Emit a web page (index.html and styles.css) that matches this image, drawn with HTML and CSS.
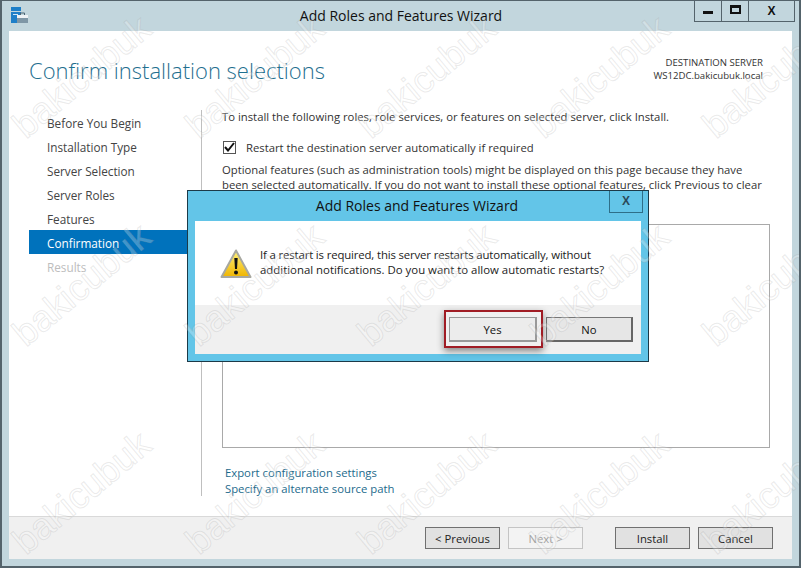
FILE: index.html
```html
<!DOCTYPE html>
<html lang="en">
<head>
<meta charset="utf-8">
<title>Add Roles and Features Wizard</title>
<link rel="stylesheet" href="styles.css">
</head>
<body>
<div class="window">
  <header class="titlebar">
    <svg class="appicon" width="17" height="16" viewBox="0 0 17 16">
      <rect x="0" y="0" width="10" height="4" fill="#1e7fc8"/>
      <rect x="0" y="5" width="10" height="11" fill="#1e7fc8"/>
      <rect x="2" y="7" width="5" height="1" fill="#cfe6f6"/>
      <path d="M6 8h11v8H6z" fill="#7f97a6"/>
      <path d="M6 8h11v3H6z" fill="#eef2f5"/>
      <path d="M9.5 8V6h4v2" fill="none" stroke="#4d6675"/>
    </svg>
    <h1 class="wintitle">Add Roles and Features Wizard</h1>
    <div class="controls">
      <span class="ctl ctl-min"><i></i></span>
      <span class="ctl ctl-max"><i></i></span>
      <span class="ctl ctl-close">X</span>
    </div>
  </header>
  <div class="client">
    <main class="page">
      <div class="head">
        <h2 class="pagetitle">Confirm installation selections</h2>
        <div class="dest">DESTINATION SERVER<br>WS12DC.bakicubuk.local</div>
      </div>
      <div class="body">
        <nav class="nav">
          <a>Before You Begin</a>
          <a>Installation Type</a>
          <a>Server Selection</a>
          <a>Server Roles</a>
          <a>Features</a>
          <a class="on">Confirmation</a>
          <a class="off">Results</a>
        </nav>
        <section class="pane">
          <p class="intro">To install the following roles, role services, or features on selected server, click Install.</p>
          <div class="check"><span class="box"><svg width="11" height="10" viewBox="0 0 11 10"><path d="M1 5l3 3.5L10 1" fill="none" stroke="#111" stroke-width="2"/></svg></span>Restart the destination server automatically if required</div>
          <p class="note">Optional features (such as administration tools) might be displayed on this page because they have been selected automatically. If you do not want to install these optional features, click Previous to clear</p>
          <div class="list"></div>
          <div class="links"><a>Export configuration settings</a><a>Specify an alternate source path</a></div>
        </section>
      </div>
    </main>
    <footer class="foot">
      <button class="btn">&lt; Previous</button>
      <button class="btn btn-off">Next &gt;</button>
      <button class="btn btn-gap">Install</button>
      <button class="btn">Cancel</button>
    </footer>
  </div>

  <div class="dialog">
    <div class="dtitle">Add Roles and Features Wizard<span class="dclose">X</span></div>
    <div class="dmain">
      <svg class="warn" width="32" height="30" viewBox="0 0 32 30">
        <defs><linearGradient id="wg" x1="0" y1="0" x2="0" y2="1"><stop offset="0" stop-color="#fff27a"/><stop offset="1" stop-color="#efb400"/></linearGradient></defs>
        <path d="M16 1.5L30.5 28H1.5z" fill="url(#wg)" stroke="#a8a8a0" stroke-width="2" stroke-linejoin="round"/>
        <path d="M14.3 9h3.4l-.7 11h-2z" fill="#111"/>
        <circle cx="16" cy="23.5" r="2" fill="#111"/>
      </svg>
      <p class="dtext">If a restart is required, this server restarts automatically, without additional notifications. Do you want to allow automatic restarts?</p>
    </div>
    <div class="dfoot">
      <span class="hl"><button class="dbtn dbtn-yes">Yes</button></span>
      <button class="dbtn">No</button>
    </div>
  </div>

  <div class="marks" aria-hidden="true">
    <span>bakicubuk</span><span>bakicubuk</span><span>bakicubuk</span><span>bakicubuk</span><span>bakicubuk</span>
    <span>bakicubuk</span><span>bakicubuk</span><span>bakicubuk</span><span>bakicubuk</span><span>bakicubuk</span>
    <span>bakicubuk</span><span>bakicubuk</span><span>bakicubuk</span><span>bakicubuk</span><span>bakicubuk</span>
  </div>
</div>
</body>
</html>
```
FILE: styles.css
```css
* { box-sizing: border-box; }
html, body { margin: 0; padding: 0; }
body { width: 801px; height: 568px; overflow: hidden; font-family: "Open Sans", "Liberation Sans", sans-serif; font-size: 11.3px; color: #333; }
.window { position: relative; width: 801px; height: 568px; background: #c2d6dd; border: 2px solid #54636b; border-top-width: 1px; padding: 0 7px 7px; display: flex; flex-direction: column; overflow: hidden; }
.titlebar { height: 30px; display: flex; align-items: flex-start; position: relative; flex: none; }
.appicon { margin: 6px 0 0 2px; }
.wintitle { position: absolute; left: 0; right: 0; top: 5px; margin: 0; padding-left: 1px; text-align: center; font-size: 14px; font-weight: 400; line-height: 20px; color: #111; }
.controls { position: absolute; right: -3px; top: -1px; display: flex; height: 22px; border: 1px solid #54636b; border-top: 0; }
.ctl { display: flex; align-items: center; justify-content: center; width: 27px; border-right: 1px solid #54636b; }
.ctl-close { width: 45px; border-right: 0; font: 700 12px "Liberation Sans", sans-serif; color: #111; }
.ctl-min i { width: 10px; height: 3px; background: #111; margin-top: 4px; }
.ctl-max i { width: 11px; height: 9px; border: 2px solid #111; border-top-width: 3px; margin-top: -2px; }

.client { flex: 1; background: #fff; display: flex; flex-direction: column; min-height: 0; }
.page { flex: 1; display: flex; flex-direction: column; min-height: 0; }
.head { height: 79px; display: flex; justify-content: space-between; padding: 23px 29px 0 20px; flex: none; }
.pagetitle { margin: 0; font-size: 22px; font-weight: 300; line-height: 32px; color: #1f6f8f; }
.dest { text-align: right; font-size: 9.6px; line-height: 13px; padding-top: 2px; color: #333; }
.body { flex: 1; display: flex; min-height: 0; padding: 0 22px 20px 20px; }
.nav { width: 173px; flex: none; border-right: 1px solid #bfbfbf; display: flex; flex-direction: column; font-size: 11.75px; }
.nav a { display: block; height: 24px; line-height: 27px; padding-left: 18px; color: #444; }
.nav .on { background: #0072bc; color: #fff; }
.nav .off { color: #bdbdbd; }
.pane { flex: 1; padding-left: 20px; display: flex; flex-direction: column; min-width: 0; }
.intro { margin: -1px 0 0; line-height: 16px; flex: none; }
.check { display: flex; align-items: center; margin-top: 14px; height: 16px; color: #333; flex: none; }
.box { width: 13px; height: 13px; border: 1px solid #555; margin-right: 10px; margin-left: 1px; display: flex; align-items: center; justify-content: center; background: #fff; }
.note { margin: 7px 0 0; line-height: 15px; height: 60px; flex: none; }
.list { border: 1px solid #a9a9a9; height: 224px; flex: none; margin-top: 2px; }
.links { margin-top: 17px; padding-left: 3px; display: flex; flex-direction: column; flex: none; color: #1c6a8c; line-height: 16px; }

.foot { height: 43px; flex: none; background: #f0f0f0; border-top: 1px solid #d9d9d9; display: flex; padding: 10px 19px 0 0; justify-content: flex-end; gap: 8px; }
.btn { width: 75px; height: 22px; padding: 0; background: #e1e1e1; border: 1px solid #707070; font: inherit; color: #222; }
.btn-off { background: #f3f3f3; border-color: #c4c4c4; color: #a0a0a0; }
.btn-gap { margin-left: 24px; }

.dialog { position: absolute; left: 185px; top: 189px; width: 462px; height: 172px; background: #63c5e8; border: 1px solid #1c3a48; padding: 0 7px 7px; display: flex; flex-direction: column; }
.dtitle { height: 30px; flex: none; position: relative; text-align: center; font-size: 14px; line-height: 30px; color: #111; padding-right: 2px; }
.dclose { position: absolute; right: -2px; top: 0; width: 34px; height: 22px; border: 1px solid #2e6f88; border-top: 0; font: 700 12px/20px "Liberation Sans", sans-serif; color: #2b4a5a; }
.dmain { height: 84px; flex: none; background: #fff; display: flex; padding: 28px 0 0 25px; }
.warn { flex: none; }
.dtext { margin: -2px 0 0 8px; width: 355px; line-height: 15px; color: #222; font-size: 11.4px; }
.dtext::first-line { letter-spacing: -.15px; }
.dfoot { flex: 1; background: #f0f0f0; display: flex; position: relative; padding: 12px 8px 0 0; justify-content: flex-end; }
.dbtn { width: 87px; height: 25px; padding: 0; font: inherit; color: #111; background: #e6e6e6; border: 1px solid #777; border-right: 2px solid #666; border-bottom: 2px solid #666; }
.dbtn-yes { width: 88px; border-color: #999; background: #ececec; }
.hl { position: absolute; left: 249px; top: 5px; width: 99px; height: 38px; border: 2px solid #a01c24; display: flex; padding: 5px 0 0 3px; box-shadow: 0 3px 7px rgba(0,0,0,.45); }

.marks { position: absolute; left: -2px; top: -1px; width: 801px; height: 568px; display: grid; grid-template-columns: repeat(5, 172.5px); grid-auto-rows: 208px; padding: 77px 0 0 82px; pointer-events: none; }
.marks span { width: 0; height: 0; display: flex; align-items: center; justify-content: center; white-space: nowrap; transform: rotate(-40deg); font: 400 37px "Liberation Sans", sans-serif; color: rgba(255,255,255,.25); -webkit-text-stroke: 1px rgba(150,150,150,.2); }
```
